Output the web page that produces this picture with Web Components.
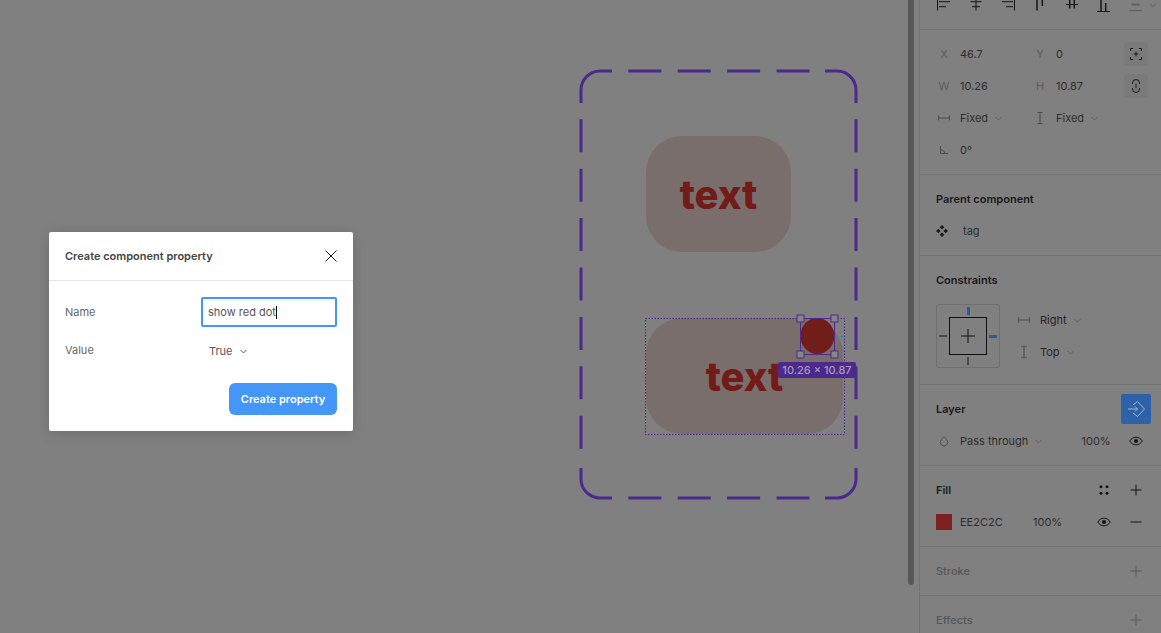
<!DOCTYPE html>
<html lang="en">
<head>
<meta charset="utf-8">
<title>Create component property</title>
<style>
  html, body { margin: 0; height: 100%; overflow: hidden; background: #808080; }
  body { font: 11px/16px Inter, "Liberation Sans", sans-serif; color: #2e2e2e; }
</style>
</head>
<body>

<fig-app>
  <fig-canvas></fig-canvas>
  <fig-panel>
    <fig-align-bar></fig-align-bar>

    <fig-section>
      <fig-row>
        <fig-prop label="X">46.7</fig-prop>
        <fig-prop label="Y">0</fig-prop>
        <fig-icon name="frame" box></fig-icon>
      </fig-row>
      <fig-row>
        <fig-prop label="W">10.26</fig-prop>
        <fig-prop label="H">10.87</fig-prop>
        <fig-icon name="link" box></fig-icon>
      </fig-row>
      <fig-row>
        <fig-prop><fig-icon slot="label" name="fixedw" tone="#4a4a4a"></fig-icon><fig-select>Fixed</fig-select></fig-prop>
        <fig-prop><fig-icon slot="label" name="fixedh" tone="#4a4a4a"></fig-icon><fig-select>Fixed</fig-select></fig-prop>
      </fig-row>
      <fig-row>
        <fig-prop><fig-icon slot="label" name="angle" tone="#4a4a4a"></fig-icon>0°</fig-prop>
      </fig-row>
    </fig-section>

    <fig-section heading="Parent component">
      <fig-row>
        <fig-icon name="component" style="margin-left:-2px"></fig-icon>
        <span style="margin-left:5px">tag</span>
      </fig-row>
    </fig-section>

    <fig-section heading="Constraints">
      <fig-constraints></fig-constraints>
    </fig-section>

    <fig-section heading="Layer">
      <fig-button slot="actions"></fig-button>
      <fig-row>
        <fig-prop wide><fig-icon slot="label" name="drop" tone="#4d4d4d"></fig-icon><fig-select>Pass through</fig-select></fig-prop>
        <span style="width:38.500px">100%</span>
        <fig-icon name="eye" tone="#141414"></fig-icon>
      </fig-row>
    </fig-section>

    <fig-section heading="Fill">
      <fig-icon slot="actions" name="dots" tone="#141414"></fig-icon>
      <fig-icon slot="actions" name="plus" tone="#141414"></fig-icon>
      <fig-row>
        <fig-swatch color="#7b2220"></fig-swatch>
        <span style="width:73px;margin-left:8px">EE2C2C</span>
        <span style="width:55px">100%</span>
        <fig-icon name="eye" tone="#141414"></fig-icon>
        <fig-icon name="minus" tone="#141414"></fig-icon>
      </fig-row>
    </fig-section>

    <fig-section heading="Stroke" dim>
      <fig-icon slot="actions" name="plus" tone="#595959"></fig-icon>
    </fig-section>

    <fig-section heading="Effects" dim>
      <fig-icon slot="actions" name="plus" tone="#595959"></fig-icon>
    </fig-section>
  </fig-panel>
</fig-app>

<fig-dialog heading="Create component property" action="Create property">
  <fig-dialog-field label="Name"><fig-text-input value="show red dot"></fig-text-input></fig-dialog-field>
  <fig-dialog-field label="Value" tall><fig-select style="margin-left:8px;color:#555">True</fig-select></fig-dialog-field>
</fig-dialog>

<script>
const ICONS = {
  frame: '<path d="M10.500 13v-2.500H13M19 10.500h2.500V13M21.500 19v2.500H19M13 21.500h-2.500V19M16 13.500v5M13.500 16h5"/>',
  link: '<path d="M12.500 14v-1a3.500 3.500 0 0 1 7 0v1M12.500 18v1a3.500 3.500 0 0 0 7 0v-1M16 13.500v5"/>',
  fixedw: '<path d="M10.500 13.500v5M21.500 13.500v5M11 16h10"/>',
  fixedh: '<path d="M13.500 10.500h5M13.500 21.500h5M16 11v10"/>',
  angle: '<path d="M12.500 12v7.500H20M12.500 15.500c2.500.5 4 2 4.500 4"/>',
  component: '<path fill="currentColor" stroke="none" d="M16 10l2.300 2.300-2.300 2.300-2.300-2.300zM16 17.400l2.300 2.300-2.300 2.300-2.300-2.300zM12.300 13.700l2.300 2.300-2.300 2.300-2.300-2.300zM19.700 13.700l2.300 2.300-2.300 2.300-2.300-2.300z"/>',
  drop: '<path d="M16 11.500l2.700 3.200a3.700 3.700 0 1 1-5.400 0z"/>',
  eye: '<path d="M9.700 16c1.700-2.600 3.800-3.800 6.300-3.800s4.600 1.200 6.300 3.800c-1.700 2.600-3.800 3.800-6.300 3.800S11.400 18.600 9.700 16z"/><circle cx="16" cy="16" r="2" fill="currentColor" stroke="none"/>',
  dots: '<g fill="currentColor" stroke="none"><circle cx="13" cy="12.800" r="1.500"/><circle cx="19" cy="12.800" r="1.500"/><circle cx="13" cy="19.200" r="1.500"/><circle cx="19" cy="19.200" r="1.500"/></g>',
  plus: '<path d="M16 10.500v11M10.500 16h11"/>',
  minus: '<path d="M10.500 16h11"/>',
  resizew: '<path stroke-width="1.500" d="M10.500 13v6M21.500 13v6M11 16h10"/>',
  resizeh: '<path stroke-width="1.500" d="M13 10.500h6M13 21.500h6M16 11v10"/>'
};

class FigIcon extends HTMLElement {
  connectedCallback() {
    const name = this.getAttribute('name');
    const tone = this.getAttribute('tone') || '#1a1a1a';
    const box = this.hasAttribute('box');
    this.attachShadow({ mode: 'open' }).innerHTML = `
      <style>
        :host { display: block; flex: none; width: ${box ? 24 : 32}px; height: ${box ? 24 : 32}px; color: ${tone}; }
        :host([box]) { background: #7a7a7a; border-radius: 2px; margin-left: 4px; }
        svg { display: block; width: 100%; height: 100%; fill: none; stroke: currentColor; }
      </style>
      <svg viewBox="${box ? '4 4 24 24' : '0 0 32 32'}">${ICONS[name] || ''}</svg>`;
  }
}
customElements.define('fig-icon', FigIcon);

class FigApp extends HTMLElement {
  constructor() {
    super();
    this.attachShadow({ mode: 'open' }).innerHTML = `
      <style>
        :host { display: flex; height: 633px; overflow: hidden; }
      </style>
      <slot></slot>`;
  }
}
customElements.define('fig-app', FigApp);

class FigCanvas extends HTMLElement {
  constructor() {
    super();
    this.attachShadow({ mode: 'open' }).innerHTML = `
      <style>
        :host { display: block; position: relative; flex: none; width: 919px; height: 633px; overflow: hidden; }
        svg { position: absolute; left: 0; top: 0; width: 919px; height: 633px; fill: none; }
        .pill {
          position: absolute; display: flex; align-items: center; justify-content: center;
          background: #7a6e6d; border-radius: 36px; height: 116px;
          color: #711c18; font: 800 40px/1 Inter, "Liberation Sans", sans-serif;
        }
        .pill span { position: relative; top: 1px; }
        .one { left: 646px; top: 136px; width: 145px; }
        .two { left: 646px; top: 318px; width: 197px; }
        .size {
          position: absolute; left: 778px; top: 362px; width: 78px; height: 16px;
          background: #4b2a8c; border-radius: 2px; color: #a79bbf;
          font: 500 11px/16px Inter, "Liberation Sans", sans-serif; text-align: center; white-space: nowrap;
        }
        .scroll { position: absolute; left: 908px; top: 0; width: 6px; height: 585px; background: #585858; border-radius: 0 0 3px 3px; }
      </style>
      <div class="pill one"><span>text</span></div>
      <div class="pill two"><span>text</span></div>
      <svg viewBox="0 0 919 633">
        <g stroke="#4b2a8c" stroke-width="3">
          <path d="M581 103V90a19 19 0 0 1 19-19h12M825 71h12a19 19 0 0 1 19 19v13M856 468v11a19 19 0 0 1-19 19h-12M612 498h-12a19 19 0 0 1-19-19v-11"/>
          <path stroke-dasharray="33 16.400" d="M628.300 71H810M628.300 498H810M581 119.300V450M856 119.300V450"/>
        </g>
        <rect x="645.500" y="318.500" width="199" height="116" stroke="#4b2a8c" stroke-dasharray="1.500 1.500"/>
        <path d="M835 336.500h8" stroke="#3f7f9f" stroke-dasharray="3 2"/>
        <ellipse cx="817.300" cy="336" rx="17" ry="18" fill="#711e1a"/>
        <rect x="800.500" y="318.500" width="34" height="36" stroke="#4b2a8c"/>
        <g fill="#868686" stroke="#4b2a8c">
          <rect x="797" y="315" width="7" height="7"/>
          <rect x="831" y="315" width="7" height="7"/>
          <rect x="797" y="351" width="7" height="7"/>
          <rect x="831" y="351" width="7" height="7"/>
        </g>
      </svg>
      <div class="size">10.26 × 10.87</div>
      <div class="scroll"></div>`;
  }
}
customElements.define('fig-canvas', FigCanvas);

class FigPanel extends HTMLElement {
  constructor() {
    super();
    this.attachShadow({ mode: 'open' }).innerHTML = `
      <style>
        :host { display: block; flex: none; width: 241px; height: 633px; overflow: hidden; border-left: 1px solid #737373; }
      </style>
      <slot></slot>`;
  }
}
customElements.define('fig-panel', FigPanel);

class FigAlignBar extends HTMLElement {
  constructor() {
    super();
    // the bar is scrolled, so the tops of the icons are cut off by the window
    const cells = [
      '<path d="M9.500 0v10.500M11 1.700h11M11 6.700h7"/>',
      '<path d="M16 0v10.500M10.500 1.700h11M12 6.700h8"/>',
      '<path d="M22.500 0v10.500M10 1.700h11M14 6.700h7"/>',
      '<path stroke-width="1.500" d="M13 0v10.500M18.300 0v6"/>',
      '<path d="M10 4.500h12"/><path stroke-width="1.500" d="M13.700 0v8.500M18.300 0v8.500"/>',
      '<path d="M9 11.500h13"/><path stroke-width="1.500" d="M13 0v11M17.700 3v8"/>',
      '<path stroke="#5f5f5f" d="M9 10.500h13"/><path stroke="#5f5f5f" stroke-width="2" d="M11.500 4.500h8"/>'
    ];
    this.attachShadow({ mode: 'open' }).innerHTML = `
      <style>
        :host { display: flex; height: 29px; padding-left: 8px; overflow: hidden; border-bottom: 1px solid #737373; }
        svg { display: block; flex: none; width: 32px; height: 29px; fill: none; stroke: #161616; }
        .more { width: 8px; margin-left: -3px; stroke: #5f5f5f; }
      </style>
      ${cells.map(c => `<svg viewBox="0 0 32 29">${c}</svg>`).join('')}
      <svg class="more" viewBox="0 0 8 29"><path d="M1 3.500l3 3 3-3"/></svg>`;
  }
}
customElements.define('fig-align-bar', FigAlignBar);

class FigSection extends HTMLElement {
  connectedCallback() {
    const heading = this.getAttribute('heading');
    this.attachShadow({ mode: 'open' }).innerHTML = `
      <style>
        :host { display: block; padding: 8px 0; border-bottom: 1px solid #737373; }
        header { display: flex; align-items: center; height: 32px; padding: 0 9px 0 8px; }
        h2 { flex: 1; margin: 0 0 0 8px; font-size: 11px; line-height: 16px; font-weight: 600; color: #1a1a1a; }
        :host([dim]) h2 { color: #565656; font-weight: 500; }
        header slot { display: flex; align-items: center; }
      </style>
      ${heading ? `<header><h2>${heading}</h2><slot name="actions"></slot></header>` : ''}
      <slot></slot>`;
  }
}
customElements.define('fig-section', FigSection);

class FigRow extends HTMLElement {
  constructor() {
    super();
    this.attachShadow({ mode: 'open' }).innerHTML = `
      <style>
        :host { display: flex; align-items: center; height: 32px; padding: 0 8px; }
      </style>
      <slot></slot>`;
  }
}
customElements.define('fig-row', FigRow);

class FigProp extends HTMLElement {
  connectedCallback() {
    const label = this.getAttribute('label');
    this.attachShadow({ mode: 'open' }).innerHTML = `
      <style>
        :host { display: grid; grid-template-columns: 32px 64px; align-items: center; height: 32px; flex: none; }
        :host([wide]) { grid-template-columns: 32px 121.500px; }
        .label { display: block; text-align: center; color: #5c5c5c; }
      </style>
      <slot name="label" class="label">${label || ''}</slot>
      <div><slot></slot></div>`;
  }
}
customElements.define('fig-prop', FigProp);

class FigSelect extends HTMLElement {
  constructor() {
    super();
    this.attachShadow({ mode: 'open' }).innerHTML = `
      <style>
        :host { display: inline-flex; align-items: center; gap: 7px; white-space: nowrap; }
        svg { display: block; width: 7px; height: 5px; fill: none; stroke: #5f5f5f; }
      </style>
      <slot></slot>
      <svg viewBox="0 0 7 5"><path d="M.5 1l3 3 3-3"/></svg>`;
  }
}
customElements.define('fig-select', FigSelect);

class FigConstraints extends HTMLElement {
  constructor() {
    super();
    this.attachShadow({ mode: 'open' }).innerHTML = `
      <style>
        :host { display: flex; padding: 8px 8px 8px 16px; gap: 8px; }
        svg.box { display: block; flex: none; width: 64px; height: 64px; }
        .side { display: flex; flex-direction: column; }
        .item { display: flex; align-items: center; height: 32px; color: #242424; }
      </style>
      <svg class="box" viewBox="0 0 64 64" fill="none">
        <rect x=".5" y=".5" width="63" height="63" rx="1.500" stroke="#707070"/>
        <rect x="13.500" y="13.500" width="37" height="37" stroke="#111"/>
        <path stroke="#111" d="M32 25v14M25 32h14M3 32h8M32 53v8"/>
        <path fill="#2d5a9a" d="M31 3h3v8h-3zM53 31h8v3h-8z"/>
      </svg>
      <div class="side">
        <div class="item"><fig-icon name="resizew" tone="#5c5c5c"></fig-icon><fig-select>Right</fig-select></div>
        <div class="item"><fig-icon name="resizeh" tone="#5c5c5c"></fig-icon><fig-select>Top</fig-select></div>
      </div>`;
  }
}
customElements.define('fig-constraints', FigConstraints);

class FigButton extends HTMLElement {
  constructor() {
    super();
    this.attachShadow({ mode: 'open' }).innerHTML = `
      <style>
        :host { display: block; width: 30px; height: 30px; margin-right: 1px; background: #2d62a8; border-radius: 2px; }
        svg { display: block; width: 30px; height: 30px; fill: none; stroke: #9db5d6; }
      </style>
      <svg viewBox="0 0 30 30">
        <path d="M12 11l4.500-3.500 7 7.500-7 7.500L12 19"/>
        <path d="M7 15h10M14 12.500l2.500 2.500-2.500 2.500"/>
      </svg>`;
  }
}
customElements.define('fig-button', FigButton);

class FigSwatch extends HTMLElement {
  connectedCallback() {
    this.attachShadow({ mode: 'open' }).innerHTML = `
      <style>
        :host { display: block; flex: none; width: 16px; height: 16px; margin-left: 8px; background: ${this.getAttribute('color')}; }
      </style>`;
  }
}
customElements.define('fig-swatch', FigSwatch);

class FigDialog extends HTMLElement {
  connectedCallback() {
    this.attachShadow({ mode: 'open' }).innerHTML = `
      <style>
        :host {
          position: absolute; left: 49px; top: 232px; width: 304px; display: block;
          background: #fff; border-radius: 2px; box-shadow: 0 2px 14px rgba(0,0,0,.15); color: #333;
        }
        header { display: flex; align-items: center; justify-content: space-between; height: 48px; padding: 0 16px; border-bottom: 1px solid #e5e5e5; }
        h1 { margin: 0; font-size: 11px; line-height: 16px; font-weight: 600; color: #444; }
        header svg { display: block; width: 12px; height: 12px; fill: none; stroke: #1a1a1a; }
        main { padding: 16px; display: flex; flex-direction: column; gap: 8px; }
        footer { display: flex; justify-content: flex-end; padding: 0 16px 16px; }
        button {
          width: 108px; height: 32px; border: 0; border-radius: 6px; background: #4597f7; color: #fff;
          font: 600 11px/16px Inter, "Liberation Sans", sans-serif; padding: 0;
        }
      </style>
      <header>
        <h1>${this.getAttribute('heading')}</h1>
        <svg viewBox="0 0 12 12"><path d="M.5.5l11 11M11.500.5l-11 11"/></svg>
      </header>
      <main><slot></slot></main>
      <footer><button>${this.getAttribute('action')}</button></footer>`;
  }
}
customElements.define('fig-dialog', FigDialog);

class FigDialogField extends HTMLElement {
  connectedCallback() {
    this.attachShadow({ mode: 'open' }).innerHTML = `
      <style>
        :host { display: grid; grid-template-columns: 136px 136px; align-items: center; height: 30px; }
        :host([tall]) { height: 32px; }
        :host([tall]) .label { margin-top: -2px; }
        .label { color: #666; }
        .control { display: flex; align-items: center; }
      </style>
      <div class="label">${this.getAttribute('label')}</div>
      <div class="control"><slot></slot></div>`;
  }
}
customElements.define('fig-dialog-field', FigDialogField);

class FigTextInput extends HTMLElement {
  connectedCallback() {
    this.attachShadow({ mode: 'open' }).innerHTML = `
      <style>
        :host { display: flex; align-items: center; box-sizing: border-box; width: 136px; height: 30px; padding-left: 5px; border: 2px solid #4597f7; border-radius: 2px; color: #555; }
        i { display: block; width: 1px; height: 13px; background: #111; }
      </style>
      <span>${this.getAttribute('value')}</span><i></i>`;
  }
}
customElements.define('fig-text-input', FigTextInput);
</script>
</body>
</html>
